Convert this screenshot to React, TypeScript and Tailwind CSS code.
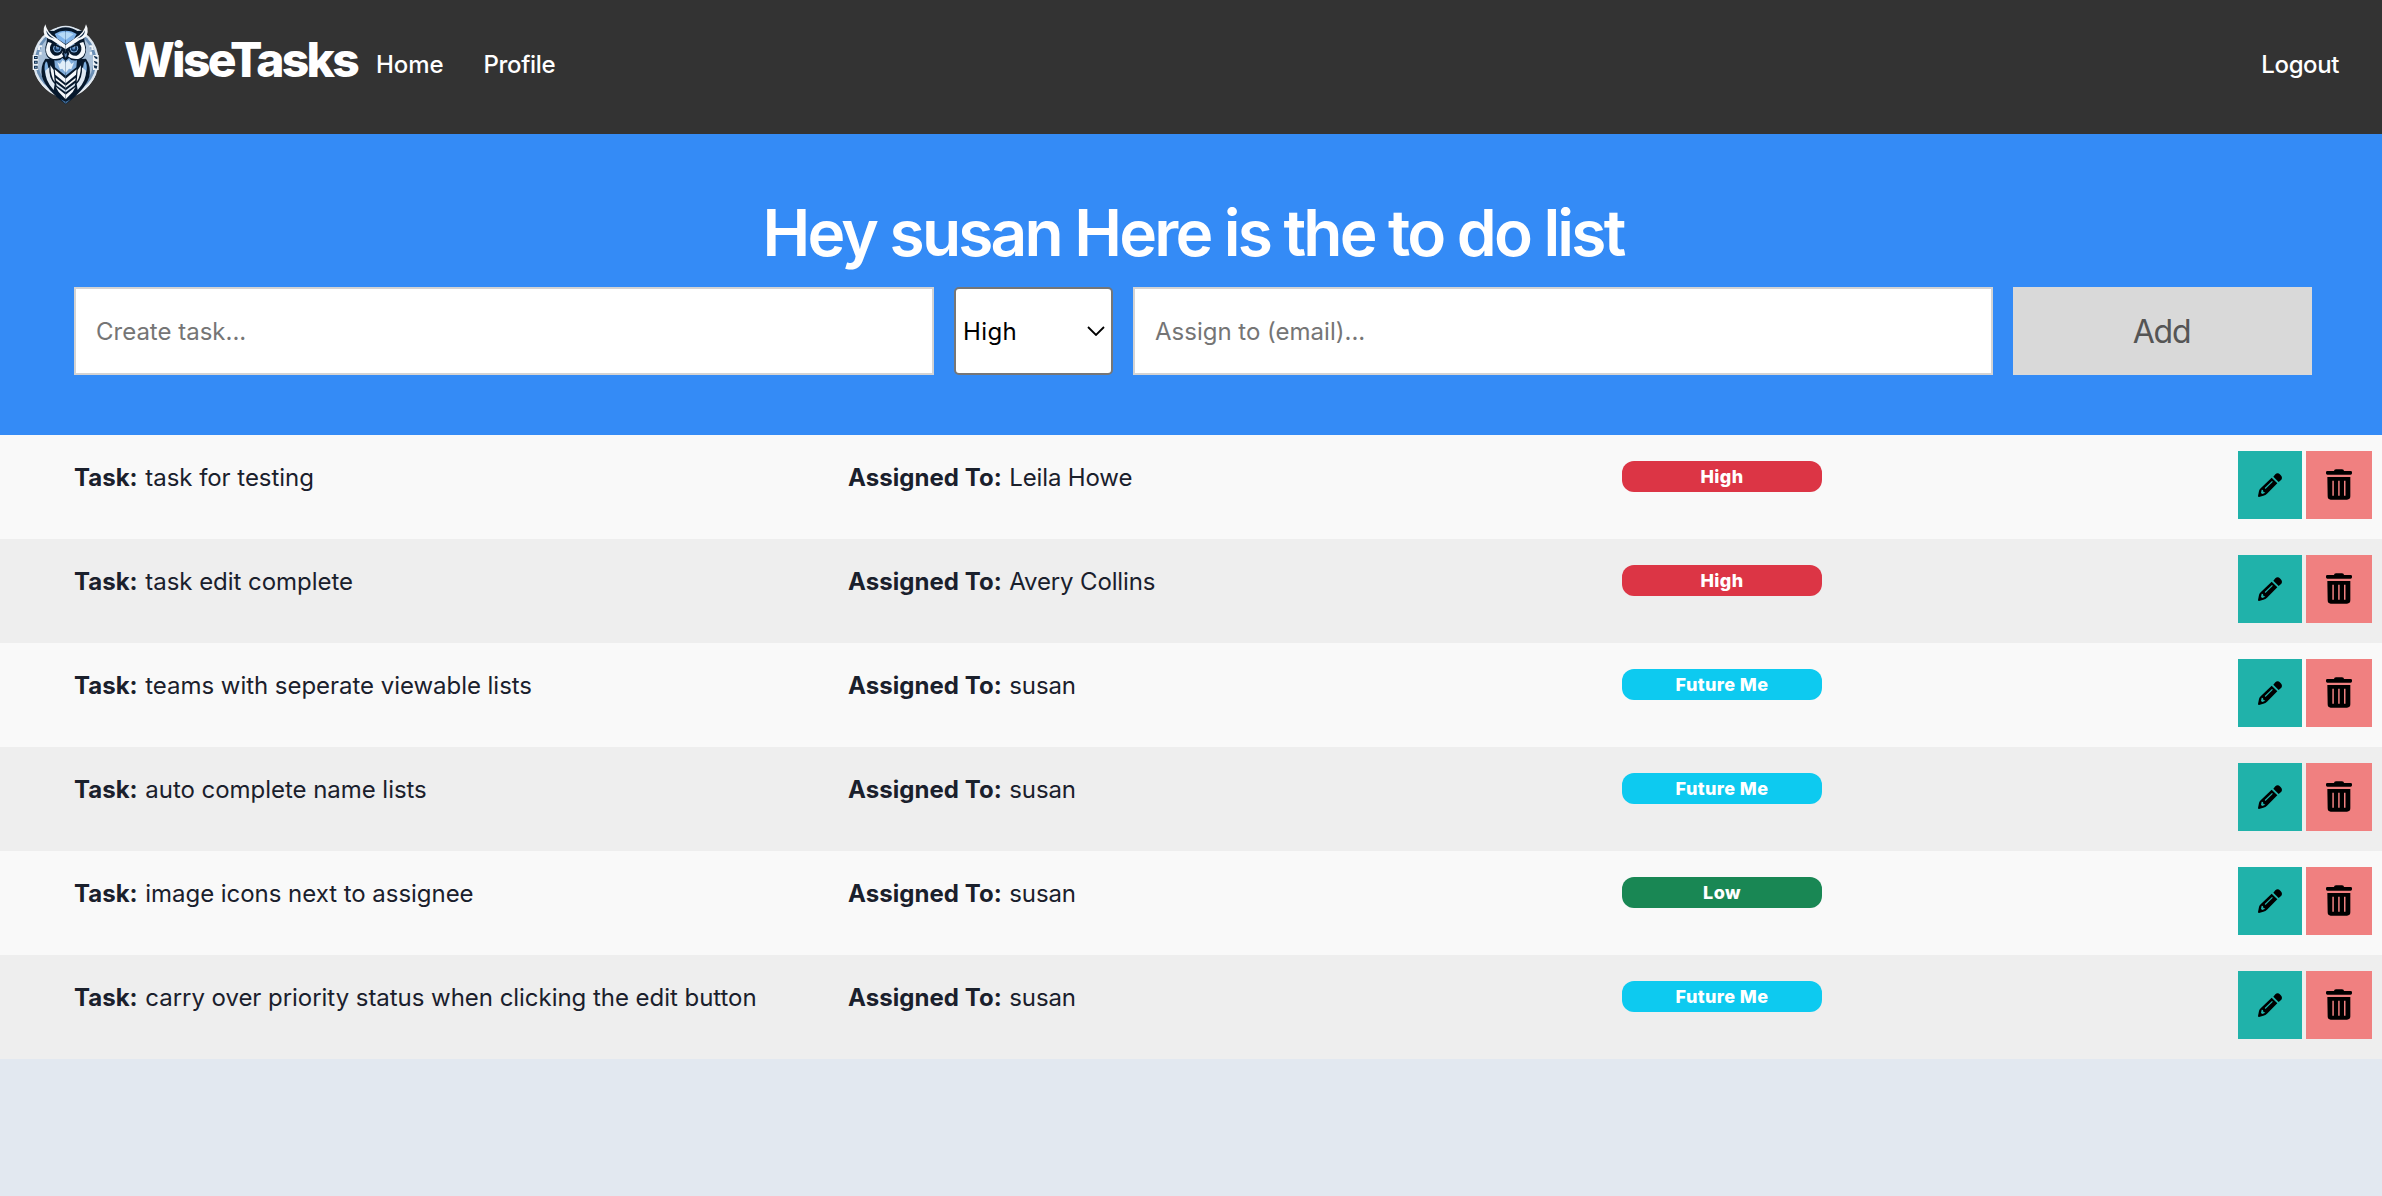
type Priority = "High" | "Low" | "Future Me";

const tasks: { task: string; assignee: string; priority: Priority }[] = [
  { task: "task for testing", assignee: "Leila Howe", priority: "High" },
  { task: "task edit complete", assignee: "Avery Collins", priority: "High" },
  { task: "teams with seperate viewable lists", assignee: "susan", priority: "Future Me" },
  { task: "auto complete name lists", assignee: "susan", priority: "Future Me" },
  { task: "image icons next to assignee", assignee: "susan", priority: "Low" },
  { task: "carry over priority status when clicking the edit button", assignee: "susan", priority: "Future Me" },
];

const badgeColor: Record<Priority, string> = {
  High: "bg-[#dc3545]",
  Low: "bg-[#198754]",
  "Future Me": "bg-[#0dcaf0]",
};

function OwlHalf() {
  return (
    <g>
      {/* wing panel */}
      <path d="M76 146 Q60 168 66 200 Q78 238 137 283 L137 150 Z" fill="#06182c" />
      <path d="M78 154 Q71 168 75 186 L84 206 Q88 180 82 158 Z" fill="#7fb0e0" />
      <path d="M76 182 Q74 210 101 240 L104 222 Q86 204 88 172 Z" fill="#dfe9f3" />
      <path d="M91 166 Q92 200 104 216 L101 180 Z" fill="#f4f8fb" />
      {/* head */}
      <path d="M80 62 Q84 88 76 112 Q74 142 96 152 L137 160 L137 64 Z" fill="#06182c" />
      <path d="M84 96 Q72 122 84 138 Q97 152 120 145 Q133 140 134 130 L128 124 Q122 139 104 137 Q88 130 90 112 Q91 104 97 100 Z" fill="#f6f9fc" />
      <circle cx="112" cy="115" r="12.5" fill="#8db9e6" />
      <circle cx="112" cy="115" r="9.5" fill="#10355f" />
      <circle cx="113" cy="114" r="4.5" fill="#5b8cc2" />
      <circle cx="110" cy="110" r="2" fill="#fff" />
      <path d="M93 94 L134 117 L134 126 L124 114 L96 105 Z" fill="#06182c" />
      {/* forehead */}
      <path d="M104 72 Q118 62 137 62 L137 103 L112 86 Z" fill="#7fb3ea" />
      <path d="M113 73 Q124 66 137 66 L137 90 L124 80 Z" fill="#b6daf7" />
      {/* brow and ear tuft */}
      <path d="M76 43 Q70 53 71 66 Q73 84 95 90 L137 118 L137 105 L105 82 Q82 69 76 43 Z" fill="#f6f9fc" />
      <path d="M79 61 Q80 76 92 82 L104 86 Q87 78 79 61 Z" fill="#102b48" />
      {/* chest */}
      <path d="M103 151 Q120 154 127 144 L137 152 L137 197 L105 172 Z" fill="#7fabd8" />
      <path d="M112 157 L120 162 L128 150 L137 157 L137 188 L127 176 L120 178 Z" fill="#e1eef9" />
      <path d="M104 178 L137 206 L137 220 L106 194 Z" fill="#f6f9fc" />
      <path d="M107 203 L137 227 L137 233 L108 211 Z" fill="#f6f9fc" />
      <path d="M108 219 L137 241 L137 247 L110 227 Z" fill="#dbe8f4" />
      <path d="M107 230 L137 254 L137 268 L116 246 Z" fill="#f6f9fc" />
      <path d="M122 268 L137 282 L137 275 Z" fill="#46719e" />
    </g>
  );
}

function OwlLogo() {
  return (
    <svg viewBox="0 0 270 300" className="mt-2.5 h-[100px] w-[90px] shrink-0">
      <ellipse cx="137" cy="153" rx="99" ry="104" fill="#dce6f0" />
      <ellipse cx="137" cy="153" rx="92" ry="97" fill="#6b8fb5" />
      <ellipse cx="137" cy="153" rx="83" ry="90" fill="#a9c0d8" />
      <path d="M48 196 Q68 236 112 255 L122 262 Q72 250 44 190 Z" fill="#eef3f8" />
      <path d="M226 196 Q206 236 162 255 L152 262 Q202 250 230 190 Z" fill="#eef3f8" />
      <g fill="#eef3f8">
        <rect x="38" y="135" width="17" height="45" />
        <rect x="219" y="135" width="17" height="45" />
        <path d="M56 106h10v6h-6v8h-8zM218 106h-10v6h6v8h8zM58 126h7v8h-7zM209 126h7v8h-7z" />
      </g>
      <g fill="#13304f">
        <path d="M42 138h11v9H42zM42 152h11v9H42zM42 167h11v9H42z" />
        <path d="M221 137l11 4v7l-7-3zM221 152l11 4v7l-7-3zM221 166l11 2-2 8-7-2z" />
      </g>
      <g fill="#8db4dc">
        <path d="M45 141h5v3h-5zM45 155h5v3h-5zM45 170h5v3h-5z" />
      </g>
      <path d="M88 72 Q137 24 186 72 L137 112 Z" fill="#06182c" />
      <path d="M95 65 Q137 34 179 65" fill="none" stroke="#dce6f0" strokeWidth="5" />
      <OwlHalf />
      <g transform="translate(274 0) scale(-1 1)">
        <OwlHalf />
      </g>
      <path d="M130 119 L137 125 L144 119 L148 132 L137 151 L126 132 Z" fill="#06182c" />
      <path d="M133 128 L137 132 L141 128 L140 137 L137 143 L134 137 Z" fill="#5d86b3" />
    </svg>
  );
}

function PencilIcon() {
  return (
    <svg viewBox="0 0 72 72" className="size-6">
      <path d="M46 11 L52 4 Q59 -3 67 5 Q75 13 70 20 L62 27 Z" />
      <path
        fillRule="evenodd"
        d="M41 14 L58 31 L27 62 Q23 66 16 68 L3 72 Q0 72 0 69 L3 54 Q4 49 8 46 Z M42 24 L20 45 L22.500 48 L44.500 26.500 Z M11 50 L9 60 L13 63 L22 59 L16 56 L15 51 Z"
      />
    </svg>
  );
}

function TrashIcon() {
  return (
    <svg viewBox="0 0 78 93" className="-mt-px h-[31px] w-[26px]">
      <path d="M24 6 Q24 1 30 1 H48 Q54 1 54 6 H74 Q78 6 78 10 V13 Q78 17 74 17 H4 Q0 17 0 13 V10 Q0 6 4 6 Z" />
      <path
        fillRule="evenodd"
        d="M4 24 H73 V82 Q73 92 63 92 H14 Q5 92 5 82 Z M19 35 V80 H23.500 V35 Z M36.500 35 V80 H41 V35 Z M54 35 V80 H58.500 V35 Z"
      />
    </svg>
  );
}

export default function App() {
  return (
    <div className="min-h-screen bg-[#e2e8f0] font-['Inter','Liberation_Sans',sans-serif] text-2xl leading-9 text-[#1a202c]">
      <nav className="flex h-[134px] items-start bg-[#333333] pr-[43px] pl-5 font-medium text-white">
        <OwlLogo />
        <span className="mt-[31px] ml-3.5 w-[233px] text-5xl leading-[58px] font-extrabold tracking-[-2.75px]">
          WiseTasks
        </span>
        <a className="mt-[47px] ml-[19px] tracking-[-0.1px]">Home</a>
        <a className="mt-[47px] ml-10 tracking-[-0.3px]">Profile</a>
        <a className="mt-[47px] ml-auto tracking-[-0.4px]">Logout</a>
      </nav>

      <header className="h-[301px] bg-[#348bf6] px-[74px] pt-[61px] pr-[70px]">
        <h1 className="text-center text-[64px] leading-[76px] font-semibold tracking-[-2.8px] text-white">
          Hey susan Here is the to do list
        </h1>
        <form className="mt-4 flex h-[88px] gap-5">
          <input
            className="min-w-0 flex-1 border-2 border-[#d3d3d3] bg-white px-5 pt-0.5 placeholder:text-[#757575]"
            placeholder="Create task..."
          />
          <div className="relative w-[159px]">
            <select className="h-full w-full appearance-none rounded-[5px] border-2 border-[#767676] bg-white pt-0.5 pl-[7px] tracking-[0.4px] text-black">
              <option>High</option>
              <option>Low</option>
              <option>Future Me</option>
            </select>
            <svg
              viewBox="0 0 18 10"
              className="pointer-events-none absolute top-[39px] right-2 h-2.5 w-[18px] fill-none stroke-black stroke-[1.8]"
            >
              <path d="M1 1 L9 9 L17 1" />
            </svg>
          </div>
          <input
            className="min-w-0 flex-1 border-2 border-[#d3d3d3] bg-white px-5 pt-0.5 placeholder:text-[#757575]"
            placeholder="Assign to (email)..."
          />
          <button
            type="button"
            className="w-[299px] bg-[#d9d9d9] pt-0.5 pr-0.5 text-[32px] tracking-[-1.2px] text-[#555555]"
          >
            Add
          </button>
        </form>
      </header>

      <ul>
        {tasks.map((t) => (
          <li key={t.task} className="flex h-[104px] items-start bg-[#f9f9f9] pr-2.5 pl-[74px] even:bg-[#eeeeee]">
            <p className="mt-[25px] w-[774px] tracking-[-0.04px]">
              <strong className="mr-px tracking-normal">Task:</strong> {t.task}
            </p>
            <p className="mt-[25px] w-[774px] tracking-[-0.15px]">
              <strong className="mr-px tracking-[0.05px]">Assigned To:</strong> {t.assignee}
            </p>
            <span
              className={`mt-[26px] w-[200px] rounded-xl text-center text-lg leading-[31px] font-extrabold tracking-[0.4px] text-white ${badgeColor[t.priority]}`}
            >
              {t.priority}
            </span>
            <div className="mt-4 ml-auto flex h-[68px] gap-1">
              <button type="button" aria-label="Edit" className="grid w-16 place-items-center bg-[#20b2aa]">
                <PencilIcon />
              </button>
              <button type="button" aria-label="Delete" className="grid w-[66px] place-items-center bg-[#f08080]">
                <TrashIcon />
              </button>
            </div>
          </li>
        ))}
      </ul>
    </div>
  );
}
